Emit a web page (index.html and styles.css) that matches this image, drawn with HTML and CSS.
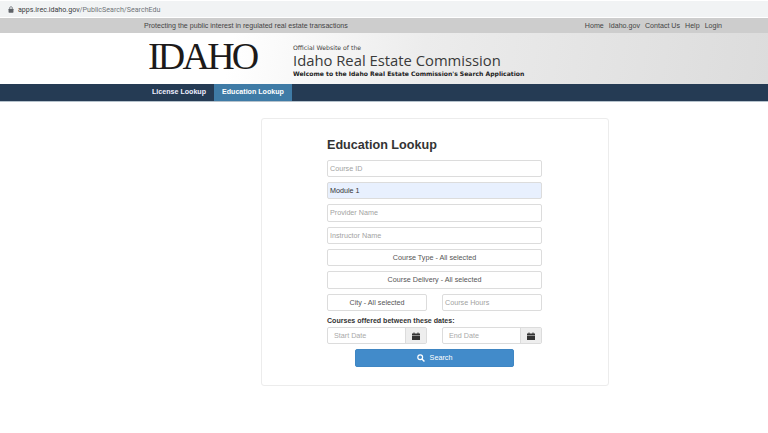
FILE: index.html
```html
<!DOCTYPE html>
<html lang="en">
<head>
<meta charset="utf-8">
<title>Education Lookup</title>
<link rel="stylesheet" href="styles.css">
</head>
<body>
<div class="urlbar">
  <svg class="lock" viewBox="0 0 8 10" width="6" height="7"><path d="M2 4V3a2 2 0 0 1 4 0v1" fill="none" stroke="#5f6368" stroke-width="1"/><rect x="0.5" y="4" width="7" height="5.5" rx="0.8" fill="#5f6368"/></svg>
  <span class="url"><span class="url-host">apps.irec.idaho.gov</span>/PublicSearch/SearchEdu</span>
</div>
<div class="topbar">
  <div class="wrap topbar-in">
    <span>Protecting the public interest in regulated real estate transactions</span>
    <nav class="toplinks"><a>Home</a><a>Idaho.gov</a><a>Contact Us</a><a>Help</a><a>Login</a></nav>
  </div>
</div>
<header class="masthead">
  <div class="wrap masthead-in">
    <div class="logo">IDAHO</div>
    <div class="titles">
      <div class="official">Official Website of the</div>
      <div class="comm">Idaho Real Estate Commission</div>
      <div class="welcome">Welcome to the Idaho Real Estate Commission's Search Application</div>
    </div>
  </div>
</header>
<nav class="mainnav">
  <div class="wrap mainnav-in">
    <a class="tab">License Lookup</a>
    <a class="tab active">Education Lookup</a>
  </div>
</nav>
<main class="page">
  <section class="card">
    <h1>Education Lookup</h1>
    <div class="form">
      <div class="field ph">Course ID</div>
      <div class="field filled">Module 1</div>
      <div class="field ph">Provider Name</div>
      <div class="field ph">Instructor Name</div>
      <div class="field sel">Course Type - All selected</div>
      <div class="field sel">Course Delivery - All selected</div>
      <div class="two">
        <div class="field sel">City - All selected</div>
        <div class="field ph">Course Hours</div>
      </div>
      <div class="dates">
        <div class="label">Courses offered between these dates:</div>
        <div class="two">
          <div class="datefield"><span class="dateph">Start Date</span><span class="cal"><svg viewBox="0 0 8 8" width="8" height="8"><path d="M0 1.5h8V3H0zM0 3.6h8V8H0zM1.5 0.4h1v1h-1zM5.5 0.4h1v1h-1z" fill="#333"/></svg></span></div>
          <div class="datefield"><span class="dateph">End Date</span><span class="cal"><svg viewBox="0 0 8 8" width="8" height="8"><path d="M0 1.5h8V3H0zM0 3.6h8V8H0zM1.5 0.4h1v1h-1zM5.5 0.4h1v1h-1z" fill="#333"/></svg></span></div>
        </div>
      </div>
      <button class="search"><svg viewBox="0 0 10 10" width="8" height="8"><circle cx="4" cy="4" r="3" fill="none" stroke="#fff" stroke-width="1.5"/><path d="M6.2 6.2L9.3 9.3" stroke="#fff" stroke-width="1.8"/></svg><span>Search</span></button>
    </div>
  </section>
</main>
</body>
</html>
```
FILE: styles.css
```css
* { box-sizing: border-box; }
html, body { margin: 0; padding: 0; }
body { width: 768px; height: 433px; overflow: hidden; background: #fff; font-family: "Liberation Sans", Arial, sans-serif; color: #333; }
.wrap { width: 768px; padding: 0 144px; }
.urlbar { height: 16px; margin-top: 1px; background: #f1f3f4; display: flex; align-items: center; padding-left: 8px; gap: 4px; }
.lock { display: block; }
.url { font-family: "Roboto", "Liberation Sans", sans-serif; font-size: 7.1px; color: #70757a; }
.url-host { color: #3c4043; }
.topbar { margin-top: 1px; height: 15px; background: #cdcdcd; font-size: 7.1px; color: #444; }
.topbar-in { height: 100%; display: flex; align-items: center; justify-content: space-between; padding-right: 46px; }
.toplinks { display: flex; gap: 5px; }
.masthead { height: 51px; background: linear-gradient(100deg, #fff 0%, #fff 30%, #ececec 55%, #dcdcdc 100%); }
.masthead-in { display: flex; height: 100%; padding-left: 148px; }
.logo { width: 145px; font-family: "Liberation Serif", serif; font-size: 38px; line-height: 1; letter-spacing: -2.8px; color: #1c1a1a; padding-top: 4px; }
.titles { padding-top: 11px; }
.official { font-family: "DejaVu Sans", sans-serif; font-size: 6.2px; line-height: 8px; color: #444; }
.comm { font-family: "Open Sans", "DejaVu Sans", sans-serif; font-size: 14.8px; line-height: 17px; color: #3a3a3a; }
.welcome { font-family: "DejaVu Sans", sans-serif; font-size: 6.08px; line-height: 10px; color: #222; font-weight: 700; }
.mainnav { height: 18px; background: #253b54; border-bottom: 1px solid #b5c2cc; }
.mainnav-in { display: flex; height: 100%; }
.tab { padding: 0 8px; font-size: 7.1px; font-weight: 700; color: #eef; line-height: 17px; }
.tab.active { background: #3f7ba6; color: #fff; }
.page { padding: 16px 0 0 261px; }
.card { width: 348px; height: 268px; border: 1px solid #ececec; border-radius: 3px; padding: 18px 66px 0 65px; background: #fff; }
h1 { margin: 0 0 5.5px; font-size: 12.6px; line-height: 17px; font-weight: 700; color: #333; }
.form { display: flex; flex-direction: column; gap: 5px; }
.field { height: 17.4px; border: 1px solid #dcdcdc; border-radius: 2px; font-size: 7.2px; line-height: 15.4px; padding: 0 2px; background: #fff; }
.ph { color: #a2a2a2; }
.filled { background: #e8f0fe; color: #333; }
.sel { text-align: center; color: #555; }
.two { display: grid; grid-template-columns: 100px 100px; justify-content: space-between; }
.dates { display: flex; flex-direction: column; }
.label { font-size: 7.07px; font-weight: 700; line-height: 10.6px; color: #333; }
.datefield { height: 17.4px; display: flex; border: 1px solid #dcdcdc; border-radius: 2px; font-size: 7.2px; line-height: 15.4px; color: #a9a9a9; }
.dateph { flex: 1; padding-left: 6px; }
.cal { width: 21px; background: #eee; border-left: 1px solid #dcdcdc; display: flex; align-items: center; justify-content: center; }
.search { align-self: center; width: 159px; height: 17.4px; background: #428bca; border: 1px solid #3f86c3; border-radius: 2px; display: flex; align-items: center; justify-content: center; gap: 5px; color: #fff; font-family: inherit; font-size: 7.2px; padding: 0; }
```
